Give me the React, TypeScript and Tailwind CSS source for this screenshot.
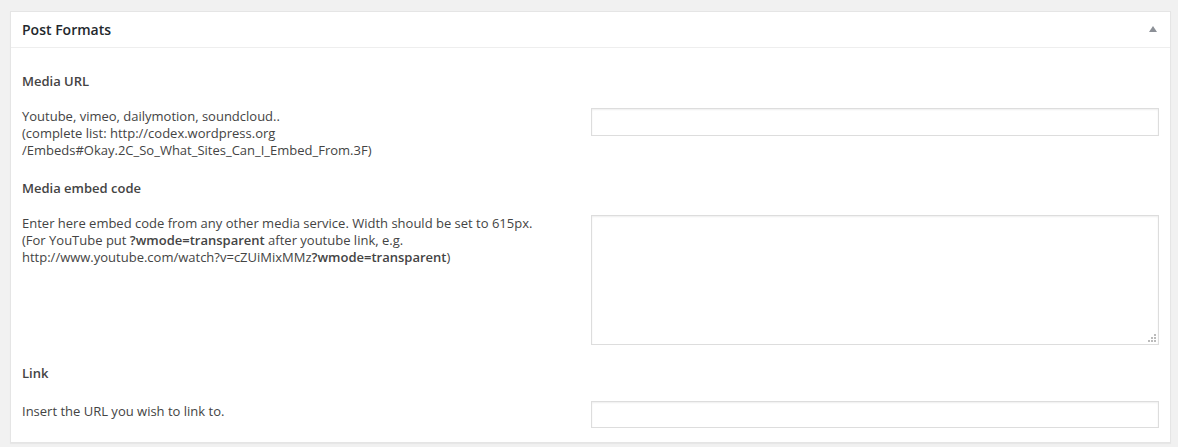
import React from "react";

const font = { fontFamily: '"Open Sans", "Noto Sans", sans-serif' };

function Grip() {
  const dots = [
    [6, 0],
    [6, 3],
    [3, 3],
    [6, 6],
    [3, 6],
    [0, 6],
  ];
  return (
    <div className="pointer-events-none absolute bottom-[3px] right-[3px] h-[8px] w-[8px]">
      {dots.map(([x, y], i) => (
        <span
          key={i}
          className="absolute h-[2px] w-[2px] bg-[#bbbbbb]"
          style={{ left: x, top: y }}
        />
      ))}
    </div>
  );
}

export default function App() {
  return (
    <div
      className="min-h-[447px] bg-[#f1f1f1] pl-[10px] pr-[7px] pt-[11px] text-[13px] leading-[17px] text-[#444]"
      style={font}
    >
      <div className="border border-[#e5e5e5] bg-white shadow-[0_1px_1px_rgba(0,0,0,0.04)]">
        <div className="flex h-[36px] items-center justify-between border-b border-[#eeeeee] pl-[11px] pr-[13px]">
          <h2 className="text-[14px] font-semibold text-[#23282d]">Post Formats</h2>
          <svg width="8" height="6" viewBox="0 0 8 6" className="mb-[1px]">
            <polygon points="4,0 8,6 0,6" fill="#8c9097" />
          </svg>
        </div>
        <div className="pb-[14px] pl-[11px] pr-[11px] pt-[25px]">
          <div className="font-semibold">Media URL</div>
          <div className="mt-[18px] flex">
            <div className="w-[569px] shrink-0">
              Youtube, vimeo, dailymotion, soundcloud..
              <br />
              (complete list: http://codex.wordpress.org
              <br />
              /Embeds#Okay.2C_So_What_Sites_Can_I_Embed_From.3F)
            </div>
            <input
              type="text"
              className="h-[28px] min-w-0 flex-1 border border-[#dddddd] bg-white shadow-[inset_0_1px_2px_rgba(0,0,0,0.07)] outline-none"
            />
          </div>

          <div className="mt-[21px] font-semibold">Media embed code</div>
          <div className="mt-[18px] flex">
            <div className="w-[569px] shrink-0">
              Enter here embed code from any other media service. Width should be set to 615px.
              <br />
              (For YouTube put <b className="font-semibold">?wmode=transparent</b> after youtube link, e.g.
              <br />
              http://www.youtube.com/watch?v=cZUiMixMMz<b className="font-semibold">?wmode=transparent</b>)
            </div>
            <div className="relative h-[130px] min-w-0 flex-1">
              <textarea className="block h-full w-full resize-none border border-[#dddddd] bg-white shadow-[inset_0_1px_2px_rgba(0,0,0,0.07)] outline-none" />
              <Grip />
            </div>
          </div>

          <div className="mt-[20px] font-semibold">Link</div>
          <div className="mt-[19px] flex">
            <div className="w-[569px] shrink-0 pt-[2px]">Insert the URL you wish to link to.</div>
            <input
              type="text"
              className="h-[27px] min-w-0 flex-1 border border-[#dddddd] bg-white shadow-[inset_0_1px_2px_rgba(0,0,0,0.07)] outline-none"
            />
          </div>
        </div>
      </div>
    </div>
  );
}
